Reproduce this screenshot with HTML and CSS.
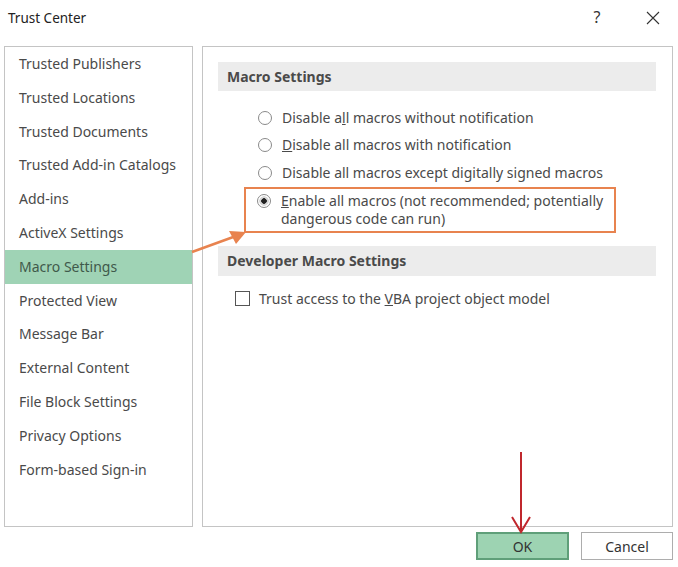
FILE: index.html
```html
<!DOCTYPE html>
<html>
<head>
<meta charset="utf-8">
<link rel="stylesheet" href="styles.css">
</head>
<body>
<div class="dialog">
  <div class="titlebar">
    <span class="title">Trust Center</span>
    <div class="title-actions">
      <span class="help">?</span>
      <span class="close">
        <svg width="14" height="14" viewBox="0 0 14 14"><path d="M1 1 L13 13 M13 1 L1 13" stroke="#333" stroke-width="1.1" fill="none"/></svg>
      </span>
    </div>
  </div>
  <div class="content">
    <ul class="sidebar">
      <li>Trusted Publishers</li>
      <li>Trusted Locations</li>
      <li>Trusted Documents</li>
      <li>Trusted Add-in Catalogs</li>
      <li>Add-ins</li>
      <li>ActiveX Settings</li>
      <li class="active">Macro Settings</li>
      <li>Protected View</li>
      <li>Message Bar</li>
      <li>External Content</li>
      <li>File Block Settings</li>
      <li>Privacy Options</li>
      <li>Form-based Sign-in</li>
    </ul>
    <div class="main">
      <div class="section-head">Macro Settings</div>
      <div class="options">
        <div class="opt"><span class="radio"></span><span class="label">Disable a<u>l</u>l macros without notification</span></div>
        <div class="opt"><span class="radio"></span><span class="label"><u>D</u>isable all macros with notification</span></div>
        <div class="opt"><span class="radio"></span><span class="label">Disable all macros except digitally signed macros</span></div>
        <div class="opt highlight"><span class="radio checked"></span><span class="label"><u>E</u>nable all macros (not recommended; potentially<br>dangerous code can run)</span></div>
      </div>
      <div class="section-head dev">Developer Macro Settings</div>
      <div class="check-row"><span class="checkbox"></span><span class="label">Trust access to the <u>V</u>BA project object model</span></div>
    </div>
  </div>
  <div class="footer">
    <button class="btn ok">OK</button>
    <button class="btn cancel">Cancel</button>
  </div>
  <svg class="annotations" width="678" height="567" viewBox="0 0 678 567">
    <line x1="192" y1="252" x2="236" y2="236" stroke="#e8834f" stroke-width="2.5"/>
    <polygon points="246,232 229,231 236,244" fill="#e8834f"/>
    <line x1="521" y1="452" x2="521" y2="531" stroke="#c0272d" stroke-width="2"/>
    <polyline points="512,517 521,532 530,517" stroke="#c0272d" stroke-width="2" fill="none"/>
  </svg>
</div>
</body>
</html>
```
FILE: styles.css
```css
* { box-sizing: border-box; }
html, body { margin: 0; padding: 0; background: #fff; }
body {
  font-family: "Noto Sans", "Open Sans", sans-serif;
  font-size: 14px;
  color: #4a4a4a;
}
.dialog {
  position: relative;
  width: 678px;
  height: 567px;
  overflow: hidden;
}
.titlebar {
  height: 36px;
  display: flex;
  align-items: center;
  justify-content: space-between;
  padding-left: 8px;
  padding-right: 15px;
}
.title { font-size: 13.5px; color: #222; }
.title-actions { display: flex; align-items: center; gap: 36px; }
.help, .close {
  width: 20px;
  display: flex;
  justify-content: center;
  align-items: center;
  color: #333;
  font-size: 16px;
}
.help { margin-top: -2px; }
.close svg { display: block; }
.content {
  display: flex;
  gap: 9px;
  margin-top: 10px;
  padding-left: 4px;
  height: 481px;
}
.sidebar {
  list-style: none;
  margin: 0;
  padding: 0;
  width: 189px;
  border: 1px solid #c4c4c4;
}
.sidebar li {
  height: 33.8px;
  line-height: 33.8px;
  padding-left: 14px;
  white-space: nowrap;
}
.sidebar li.active { background: #9fd3b5; color: #3f5a4b; }
.main {
  width: 471px;
  border: 1px solid #c4c4c4;
  padding: 15px 16px 0 15px;
}
.section-head {
  height: 29px;
  line-height: 29px;
  background: #ececec;
  padding-left: 9px;
  font-weight: bold;
  color: #4a4a4a;
}
.section-head.dev { margin-top: 13px; height: 30px; line-height: 30px; }
.options {
  padding-top: 13px;
  padding-left: 40px;
}
.opt {
  display: flex;
  align-items: center;
  height: 27.5px;
}
.radio {
  width: 14px;
  height: 14px;
  border: 1px solid #8a8a8a;
  border-radius: 50%;
  background: #fff;
  margin-right: 10px;
  flex: none;
}
.radio.checked {
  background: radial-gradient(circle, #222 0 2.5px, #d8d8d8 3px 4.5px, #fff 5px);
}
.label { white-space: nowrap; line-height: 18px; }
.opt.highlight {
  height: auto;
  align-items: flex-start;
  margin-left: -14px;
  width: 372px;
  border: 2px solid #e8834f;
  padding: 3px 0 3px 11px;
}
.opt.highlight .radio { margin-top: 2px; }
.check-row {
  display: flex;
  align-items: center;
  margin-top: 14px;
  padding-left: 17px;
}
.checkbox {
  width: 15px;
  height: 15px;
  border: 1px solid #555;
  background: #fff;
  margin-right: 9px;
}
.footer {
  display: flex;
  justify-content: flex-end;
  gap: 12px;
  margin-top: 5px;
  padding-right: 5px;
}
.btn {
  height: 28px;
  font-family: "Noto Sans", "Open Sans", sans-serif;
  font-size: 14px;
  color: #333;
  padding: 0;
}
.btn.ok {
  width: 93px;
  background: #9dd3b2;
  border: 2px solid #5f9f79;
}
.btn.cancel {
  width: 92px;
  background: #fff;
  border: 1px solid #adadad;
}
.annotations {
  position: absolute;
  left: 0;
  top: 0;
  pointer-events: none;
}
```
